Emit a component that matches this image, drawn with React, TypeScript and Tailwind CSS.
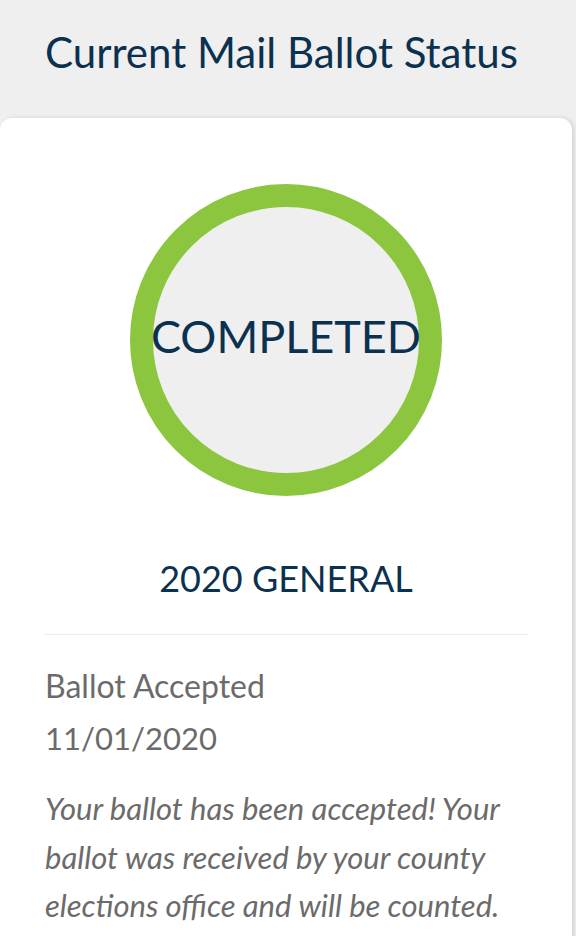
import React from "react";

export default function App() {
  return (
    <div
      className="min-h-[936px] h-[936px] overflow-hidden bg-[#efefef]"
      style={{ fontFamily: "Lato, 'Open Sans', sans-serif" }}
    >
      <div className="flex h-[118px] items-center px-[45px] pb-[14px]">
        <h1 className="text-[42px] leading-none text-[#0b3150]">Current Mail Ballot Status</h1>
      </div>
      <div className="mr-[4px] h-[900px] rounded-t-[12px] bg-white shadow-[2px_0_4px_rgba(0,0,0,0.12)]">
        <div className="flex flex-col items-center pt-[66px]">
          <div className="flex h-[312px] w-[312px] items-center justify-center rounded-full border-[23px] border-[#8cc63f] bg-[#efefef]">
            <span className="mb-[8px] whitespace-nowrap text-[45px] leading-none text-[#0b3150]">
              COMPLETED
            </span>
          </div>
          <div className="mt-[64px] text-[36px] leading-none text-[#0b3150]">2020 GENERAL</div>
        </div>
        <div className="mx-[44px] mt-[38px] border-t border-[#ececec]" />
        <div className="px-[45px] pt-[25px] text-[#6b6b6b]">
          <div className="text-[32px] leading-[52px]">Ballot Accepted</div>
          <div className="text-[31px] leading-[52px]">11/01/2020</div>
          <p className="mt-[20px] text-[31px] italic leading-[48.5px]">
            Your ballot has been accepted! Your ballot was received by your county elections office and will be counted.
          </p>
        </div>
      </div>
    </div>
  );
}
